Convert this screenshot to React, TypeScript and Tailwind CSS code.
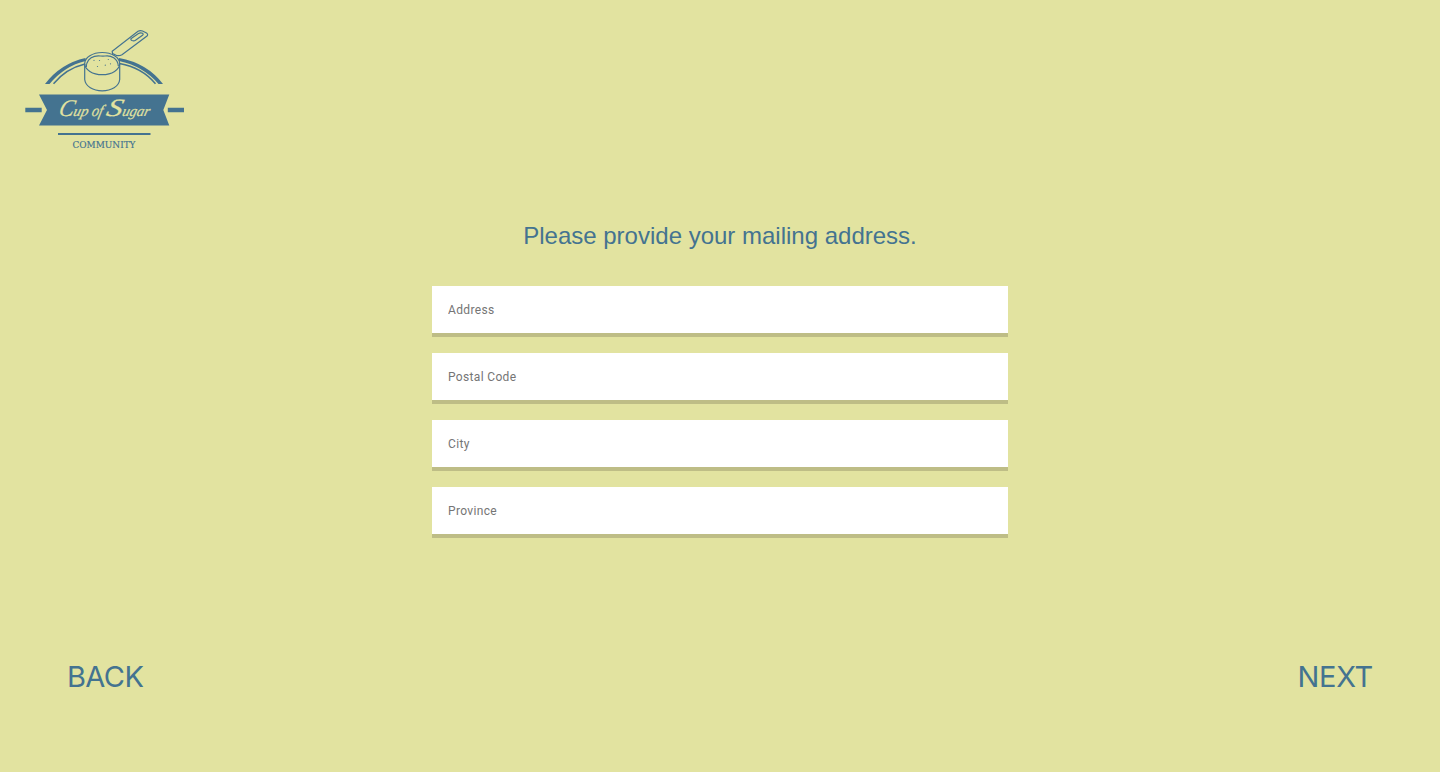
const fields = ["Address", "Postal Code", "City", "Province"];

function Logo() {
  return (
    <svg
      className="block h-[135px] w-[170px]"
      viewBox="20 20 170 135"
      fill="none"
      stroke="#447390"
      role="img"
      aria-label="Cup of Sugar Community"
    >
      {/* arches */}
      <path d="M45 84 Q60.500 63.500 85.500 58 V61 Q64.500 66 49.500 84Z" fill="#447390" stroke="none" />
      <path d="M53.500 83.800 Q66 68.500 85 64" strokeWidth="1.500" />
      <path d="M163 84 Q147 63 119 58 V61 Q143 66 158.500 84Z" fill="#447390" stroke="none" />
      <path d="M155.500 83.800 Q142 67.500 119.500 63.500" strokeWidth="1.500" />

      {/* measuring cup */}
      <g strokeWidth="1.200">
        <ellipse cx="102.200" cy="63.600" rx="17.500" ry="11.100" />
        <path d="M84.700 64 V79.500 C85.500 86.500 93 90.800 102.200 90.800 S119 86.500 119.700 79.500 V64" />
        <path d="M86.300 67 C86.300 62 89.500 57.500 94.500 56.300 C99 55.300 101 56.500 105 56 C111 55 117.800 58.500 118.300 66" />
        <path d="M112.700 55 L112.200 51.200 L138 31.300 Q140.200 30 142.500 31 L146.500 33 Q148.500 34.500 147 36 L122 54.700 Q119.500 56 116.500 55.500 L112.700 53.500" />
        <path d="M131.200 38.500 L138.500 33.500 Q140.500 32.500 142.500 33.300 Q143.800 34.200 142.500 35.200 L135.500 40.200 Q134 41.300 132 40.500 Q130.200 39.700 131.200 38.500Z" />
      </g>
      <g fill="#447390" stroke="none">
        <circle cx="94" cy="60.300" r=".6" />
        <circle cx="99.500" cy="60.500" r=".6" />
        <circle cx="108.300" cy="59.500" r=".6" />
        <circle cx="97.500" cy="66.500" r=".6" />
        <circle cx="105.300" cy="65.200" r=".6" />
        <circle cx="110.500" cy="63.800" r=".6" />
      </g>

      {/* ribbon */}
      <g fill="#447390" stroke="none">
        <path d="M39 94.500 H169.300 L163.300 110 L169.300 125.500 H39 L47 110Z" />
        <path d="M25.300 107.700 H41.700 V112.300 H25.300Z M167.800 107.700 H184 V112.300 H167.800Z" />
        <path d="M58 133.100 H150.500 V134.900 H58Z" />
      </g>
      <g
        stroke="#e2e3a0"
        strokeWidth="0.200"
        fontFamily="'Liberation Serif', serif"
        fontStyle="italic"
        fill="#e2e3a0"
        transform="translate(0 115.500) skewX(-14)"
      >
        <text x="58" y="0.500" fontSize="24" textLength="15" lengthAdjust="spacingAndGlyphs">C</text>
        <text x="72.500" y="0" fontSize="15" textLength="15" lengthAdjust="spacingAndGlyphs">up</text>
        <text x="91" y="0" fontSize="16" textLength="11" lengthAdjust="spacingAndGlyphs">of</text>
        <text x="105.500" y="0.500" fontSize="25" textLength="16" lengthAdjust="spacingAndGlyphs">S</text>
        <text x="121.500" y="0" fontSize="15" textLength="27.500" lengthAdjust="spacingAndGlyphs">ugar</text>
      </g>
      <text
        x="72.500"
        y="148.300"
        fontFamily="'DejaVu Serif', serif"
        fontSize="10"
        textLength="63"
        lengthAdjust="spacingAndGlyphs"
        fill="#447390"
        stroke="#447390"
        strokeWidth="0.200"
      >
        COMMUNITY
      </text>
    </svg>
  );
}

export default function App() {
  return (
    <div className="flex h-screen flex-col overflow-hidden bg-[#e2e3a0] text-[#447390]">
      <header className="pt-5 pl-5">
        <Logo />
      </header>
      <main className="mx-auto mt-[63px] w-[576px]">
        <h1 className="text-center font-['Liberation_Sans',sans-serif] text-2xl leading-9">
          Please provide your mailing address.
        </h1>
        <form className="mt-8 flex flex-col gap-4">
          {fields.map((name) => (
            <input
              key={name}
              aria-label={name}
              placeholder={name}
              className="block h-[51px] w-full border-b-4 border-[#bebd86] bg-white px-4 font-['Roboto',sans-serif] text-xs tracking-[0.34px] text-[#333] outline-none placeholder:text-[#757575]"
            />
          ))}
        </form>
      </main>
      <nav className="mt-[117px] flex justify-between px-[67px] font-['Inter',sans-serif] text-[29px] leading-[44px] font-normal">
        <button type="button" className="tracking-[-0.6px]">BACK</button>
        <button type="button" className="tracking-[-0.3px]">NEXT</button>
      </nav>
    </div>
  );
}
